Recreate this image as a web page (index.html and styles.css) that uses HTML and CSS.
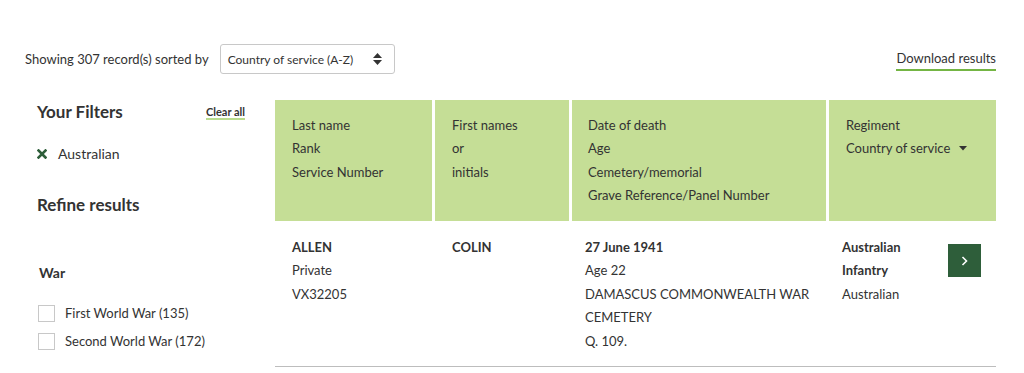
FILE: index.html
```html
<!DOCTYPE html>
<html lang="en">
  <head>
    <meta charset="UTF-8" />
    <meta name="viewport" content="width=device-width, initial-scale=1.0" />
    <link rel="stylesheet" href="styles.css">
    <title>Search results</title>
  </head>
  <body>
    <div class="page">
      <div class="toolbar">
        <div class="sort">
          <span class="count">Showing 307 record(s) sorted by</span>
          <div class="select">
            <span>Country of service (A-Z)</span>
            <svg class="updown" width="9" height="12" viewBox="0 0 9 12">
              <path d="M4.5 0 L9 5 H0 Z" fill="#333"/>
              <path d="M0 7 H9 L4.5 12 Z" fill="#333"/>
            </svg>
          </div>
        </div>
        <a class="download" href="#">Download results</a>
      </div>

      <div class="main">
        <aside class="sidebar">
          <div class="filters-head">
            <h2>Your Filters</h2>
            <a class="clear" href="#">Clear all</a>
          </div>
          <div class="filter">
            <svg width="10" height="10" viewBox="0 0 10 10">
              <path d="M1.5 1.5 L8.5 8.5 M8.5 1.5 L1.5 8.5" stroke="#2e5e3a" stroke-width="2.6" stroke-linecap="square"/>
            </svg>
            <span>Australian</span>
          </div>
          <h2 class="refine">Refine results</h2>
          <h3 class="group">War</h3>
          <ul class="checks">
            <li><span class="box"></span>First World War (135)</li>
            <li><span class="box"></span>Second World War (172)</li>
          </ul>
        </aside>

        <div class="results">
          <div class="row head">
            <div class="cell">Last name<br>Rank<br>Service Number</div>
            <div class="cell">First names<br>or<br>initials</div>
            <div class="cell">Date of death<br>Age<br>Cemetery/memorial<br>Grave Reference/Panel Number</div>
            <div class="cell">Regiment<br>Country of service
              <svg class="caret" width="8" height="5" viewBox="0 0 8 5"><path d="M0 0 H8 L4 4.5 Z" fill="#333"/></svg>
            </div>
          </div>
          <div class="row record">
            <div class="cell"><b>ALLEN</b><br>Private<br>VX32205</div>
            <div class="cell"><b>COLIN</b></div>
            <div class="cell"><b>27 June 1941</b><br>Age 22<br>DAMASCUS COMMONWEALTH WAR CEMETERY<br>Q. 109.</div>
            <div class="cell last">
              <div class="regiment"><b>Australian Infantry</b><br>Australian</div>
              <a class="more" href="#">
                <svg width="7" height="10" viewBox="0 0 7 10"><path d="M1.5 1 L5.5 5 L1.5 9" stroke="#fff" stroke-width="1.6" fill="none"/></svg>
              </a>
            </div>
          </div>
        </div>
      </div>
    </div>
  </body>
</html>
```

FILE: styles.css
```css
body {
    margin: 0;
    font-family: Lato, "Open Sans", sans-serif;
    font-size: 13px;
    color: #333;
    background: #fff;
}

.page {
    padding: 44px 28px 0 25px;
}

.toolbar {
    display: flex;
    justify-content: space-between;
    align-items: center;
    height: 30px;
}

.sort {
    display: flex;
    align-items: center;
    gap: 11px;
}

.select {
    display: flex;
    align-items: center;
    justify-content: space-between;
    box-sizing: border-box;
    width: 175px;
    height: 30px;
    padding: 0 12px 0 7px;
    border: 1px solid #c8c8c8;
    border-radius: 3px;
    font-size: 12px;
}

.download {
    color: #333;
    text-decoration: none;
    padding-bottom: 3px;
    border-bottom: 2px solid #74b544;
    margin-top: 3px;
}

.main {
    display: flex;
    gap: 30px;
    margin-top: 26px;
}

.sidebar {
    width: 208px;
    padding-left: 12px;
}

.filters-head {
    display: flex;
    justify-content: space-between;
    align-items: center;
    height: 24px;
}

h2 {
    margin: 0;
    font-size: 17px;
    line-height: 24px;
    font-weight: 700;
}

.clear {
    font-size: 11px;
    font-weight: 700;
    color: #333;
    text-decoration: none;
    border-bottom: 2px solid #b9dc8d;
    line-height: 13px;
    margin-top: 1px;
}

.filter {
    display: flex;
    align-items: center;
    gap: 11px;
    margin-top: 18px;
    line-height: 23px;
    font-size: 14px;
}

.refine {
    margin-top: 28px;
}

.group {
    margin: 46px 0 0 2px;
    font-size: 14px;
    line-height: 20px;
}

.checks {
    list-style: none;
    margin: 16px 0 0 1px;
    padding: 0;
}

.checks li {
    display: flex;
    align-items: center;
    gap: 10px;
    height: 28px;
}

.box {
    width: 15px;
    height: 15px;
    border: 1px solid #c8c8c8;
}

.results {
    width: 721px;
}

.row {
    display: grid;
    grid-template-columns: 157px 134px 254px 167px;
    column-gap: 3px;
    line-height: 23.4px;
}

.head .cell {
    background: #c5de96;
    padding: 14px 16px 14px 17px;
    height: 93px;
}

.head .cell:nth-child(3) {
    padding-left: 16px;
}

.caret {
    margin-left: 5px;
    vertical-align: 2px;
}

.record {
    border-bottom: 1px solid #bdbdbd;
}

.record .cell {
    padding: 15px 12px 13px 17px;
}

.record .cell:nth-child(3) {
    padding-left: 13px;
}

.record .last {
    display: flex;
    align-items: flex-start;
    justify-content: space-between;
    padding-left: 13px;
    padding-right: 15px;
}

.regiment {
    width: 100px;
}

.more {
    display: flex;
    align-items: center;
    justify-content: center;
    width: 33px;
    height: 33px;
    margin-top: 8px;
    background: #2e5e3a;
}
```
